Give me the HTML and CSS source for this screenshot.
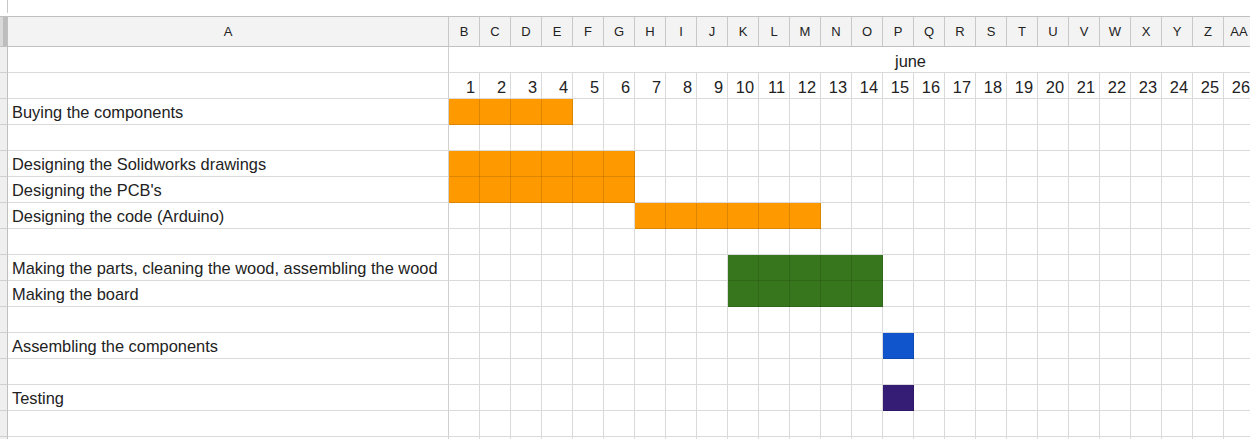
FILE: index.html
```html
<!DOCTYPE html>
<html lang="en">
<head>
  <meta charset="UTF-8">
  <title>Project planning - June</title>
  <link rel="stylesheet" href="styles.css">
</head>
<body>
  <div class="toolbar"><div class="handle"></div></div>

  <div class="sheet">
    <div class="colhead">
      <div class="corner"></div>
      <div class="col wide">A</div>
      <div class="col">B</div><div class="col">C</div><div class="col">D</div><div class="col">E</div>
      <div class="col">F</div><div class="col">G</div><div class="col">H</div><div class="col">I</div>
      <div class="col">J</div><div class="col">K</div><div class="col">L</div><div class="col">M</div>
      <div class="col">N</div><div class="col">O</div><div class="col">P</div><div class="col">Q</div>
      <div class="col">R</div><div class="col">S</div><div class="col">T</div><div class="col">U</div>
      <div class="col">V</div><div class="col">W</div><div class="col">X</div><div class="col">Y</div>
      <div class="col">Z</div><div class="col">AA</div>
    </div>

    <div class="row">
      <div class="rh"></div>
      <div class="task"></div>
      <div class="days merged"><span class="month">june</span></div>
    </div>

    <div class="row">
      <div class="rh"></div>
      <div class="task"></div>
      <div class="days">
        <span class="num">1</span><span class="num">2</span><span class="num">3</span><span class="num">4</span>
        <span class="num">5</span><span class="num">6</span><span class="num">7</span><span class="num">8</span>
        <span class="num">9</span><span class="num">10</span><span class="num">11</span><span class="num">12</span>
        <span class="num">13</span><span class="num">14</span><span class="num">15</span><span class="num">16</span>
        <span class="num">17</span><span class="num">18</span><span class="num">19</span><span class="num">20</span>
        <span class="num">21</span><span class="num">22</span><span class="num">23</span><span class="num">24</span>
        <span class="num">25</span><span class="num">26</span>
      </div>
    </div>

    <div class="row">
      <div class="rh"></div>
      <div class="task">Buying the components</div>
      <div class="days"><span class="bar orange" style="grid-column: 1 / 5"></span></div>
    </div>

    <div class="row">
      <div class="rh"></div>
      <div class="task"></div>
      <div class="days"></div>
    </div>

    <div class="row">
      <div class="rh"></div>
      <div class="task">Designing the Solidworks drawings</div>
      <div class="days"><span class="bar orange" style="grid-column: 1 / 7"></span></div>
    </div>

    <div class="row">
      <div class="rh"></div>
      <div class="task">Designing the PCB's</div>
      <div class="days"><span class="bar orange" style="grid-column: 1 / 7"></span></div>
    </div>

    <div class="row">
      <div class="rh"></div>
      <div class="task">Designing the code (Arduino)</div>
      <div class="days"><span class="bar orange" style="grid-column: 7 / 13"></span></div>
    </div>

    <div class="row">
      <div class="rh"></div>
      <div class="task"></div>
      <div class="days"></div>
    </div>

    <div class="row">
      <div class="rh"></div>
      <div class="task">Making the parts, cleaning the wood, assembling the wood</div>
      <div class="days"><span class="bar green" style="grid-column: 10 / 15"></span></div>
    </div>

    <div class="row">
      <div class="rh"></div>
      <div class="task">Making the board</div>
      <div class="days"><span class="bar green" style="grid-column: 10 / 15"></span></div>
    </div>

    <div class="row">
      <div class="rh"></div>
      <div class="task"></div>
      <div class="days"></div>
    </div>

    <div class="row">
      <div class="rh"></div>
      <div class="task">Assembling the components</div>
      <div class="days"><span class="bar blue" style="grid-column: 15 / 16"></span></div>
    </div>

    <div class="row">
      <div class="rh"></div>
      <div class="task"></div>
      <div class="days"></div>
    </div>

    <div class="row">
      <div class="rh"></div>
      <div class="task">Testing</div>
      <div class="days"><span class="bar purple" style="grid-column: 15 / 16"></span></div>
    </div>

    <div class="row">
      <div class="rh"></div>
      <div class="task"></div>
      <div class="days"></div>
    </div>

    <div class="row">
      <div class="rh"></div>
      <div class="task"></div>
      <div class="days"></div>
    </div>
  </div>
</body>
</html>
```

FILE: styles.css
```css
html, body {
  margin: 0;
  padding: 0;
  overflow: hidden;
  background: #fff;
}
body {
  font-family: "Liberation Sans", Arial, sans-serif;
  font-size: 16.4px;
  color: #222;
}
.toolbar {
  height: 16px;
}
.handle {
  margin-left: 7px;
  width: 1px;
  height: 13px;
  background: #c8c8c8;
}
.sheet {
  width: 1255px;
}

/* column letters */
.colhead {
  display: grid;
  grid-template-columns: 8px 441px repeat(26, 31px);
  height: 31px;
  box-sizing: border-box;
  border-top: 1px solid #c0c0c0;
  border-bottom: 1px solid #c0c0c0;
  background: #f3f3f3;
}
.corner {
  background: linear-gradient(to right, #d9d9d9 0 3px, #bdbdbd 3px 7px, #c0c0c0 7px);
}
.col {
  display: flex;
  align-items: center;
  justify-content: center;
  border-right: 1px solid #c8c8c8;
  font-size: 13px;
  color: #222;
}

/* rows */
.row {
  display: grid;
  grid-template-columns: 8px 441px 806px;
  height: 26px;
}
.rh {
  background: #efefef;
  border-right: 1px solid #c0c0c0;
  border-bottom: 1px solid #cfcfcf;
}
.task {
  display: flex;
  align-items: flex-end;
  padding: 0 3px 3px 4px;
  line-height: 18px;
  white-space: nowrap;
  border-right: 1px solid #d0d0d0;
  border-bottom: 1px solid #dadada;
}
.days {
  display: grid;
  grid-template-columns: repeat(26, 31px);
  background-image:
    linear-gradient(to right, transparent 30px, #dadada 30px),
    linear-gradient(to bottom, transparent 25px, #dadada 25px);
  background-size: 31px 26px;
}
.days.merged {
  display: flex;
  background-image: linear-gradient(to bottom, transparent 25px, #dadada 25px);
}
.month {
  align-self: flex-end;
  padding: 0 0 3px 446px;
  line-height: 18px;
}
.num {
  display: flex;
  align-items: flex-end;
  justify-content: flex-end;
  padding: 0 5px 3px 0;
  line-height: 18px;
}

/* gantt bars */
.bar {
  grid-row: 1;
  background-image:
    linear-gradient(to right, transparent 30px, rgba(0,0,0,0.13) 30px),
    linear-gradient(to bottom, transparent 25px, rgba(0,0,0,0.13) 25px);
  background-size: 31px 26px;
}
.orange { background-color: #ff9900; }
.green { background-color: #38761d; }
.blue { background-color: #1155cc; }
.purple { background-color: #351c75; }
```
